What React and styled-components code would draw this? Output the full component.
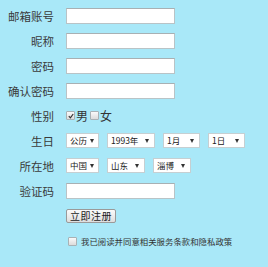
import React from "react";
import styled, { createGlobalStyle } from "styled-components";

const Global = createGlobalStyle`
  html, body { margin: 0; padding: 0; background: #a9e8f8; }
  body { font-family: "Noto Sans CJK SC", "Noto Sans", sans-serif; color: #333; }
`;

const Form = styled.div`
  display: grid;
  grid-template-columns: 54px 1fr;
  grid-template-rows: repeat(9, 25px) 26px;
  column-gap: 12px;
  padding-top: 3px;
  width: 268px;
  height: 267px;
  box-sizing: border-box;
  overflow: hidden;
`;

const Label = styled.div`
  display: flex;
  align-items: center;
  justify-content: flex-end;
  font-size: 11.5px;
  color: #3a3a3a;
  white-space: nowrap;
`;

const Field = styled.div`
  display: flex;
  align-items: center;
  gap: ${(p) => p.$gap || 0}px;
  grid-column: 2;
`;

const Input = styled.div`
  width: 107px;
  height: 14px;
  background: #fff;
  border: 1px solid #b9c3c6;
  border-top-color: #a8b0b3;
`;

const Check = styled.span`
  width: 7px;
  height: 7px;
  border: 1px solid #a9b2b5;
  border-radius: 1px;
  background: linear-gradient(#fafafa, #dcdcdc);
  display: inline-flex;
  align-items: center;
  justify-content: center;
  flex: none;
`;

const CheckText = styled.span`
  font-size: 12px;
  color: #333;
  margin: 0 2px 0 1px;
`;

const Select = styled.div`
  width: ${(p) => p.$w}px;
  flex: none;
  height: 15px;
  box-sizing: border-box;
  background: #fff;
  border: 1px solid #c6cfd2;
  display: flex;
  align-items: center;
  justify-content: space-between;
  padding: 0 5px 0 3px;
  white-space: nowrap;
  overflow: hidden;
`;

const SelectText = styled.span`
  display: inline-block;
  font-size: 10px;
  color: #222;
  transform: scale(0.85);
  transform-origin: left center;
`;

const Arrow = styled.span`
  width: 0;
  height: 0;
  border-left: 2.5px solid transparent;
  border-right: 2.5px solid transparent;
  border-top: 4px solid #333;
  flex: none;
`;

const Button = styled.div`
  width: 50px;
  height: 14px;
  box-sizing: border-box;
  border: 1px solid #9a9a9a;
  border-radius: 2px;
  background: linear-gradient(#fbfbfb, #dedede);
  font-size: 10px;
  color: #222;
  display: flex;
  align-items: center;
  justify-content: center;
  letter-spacing: 0.5px;
  white-space: nowrap;
`;

const Agree = styled.div`
  display: flex;
  align-items: center;
  grid-column: 2;
  padding-left: 2px;
  gap: 4px;
`;

const AgreeText = styled.span`
  display: inline-block;
  font-size: 10px;
  color: #333;
  white-space: nowrap;
  transform: scale(0.84);
  transform-origin: left center;
`;

const Tick = () => (
  <svg width="6" height="6" viewBox="0 0 6 6">
    <path d="M0.8 3.2 L2.4 4.8 L5.2 1" stroke="#333" strokeWidth="1.2" fill="none" />
  </svg>
);

const TextRow = ({ label }) => (
  <>
    <Label>{label}</Label>
    <Field>
      <Input />
    </Field>
  </>
);

const Dropdown = ({ w, children }) => (
  <Select $w={w}>
    <SelectText>{children}</SelectText>
    <Arrow />
  </Select>
);

export default function App() {
  return (
    <>
      <Global />
      <Form>
        <TextRow label="邮箱账号" />
        <TextRow label="昵称" />
        <TextRow label="密码" />
        <TextRow label="确认密码" />
        <Label>性别</Label>
        <Field>
          <Check>
            <Tick />
          </Check>
          <CheckText>男</CheckText>
          <Check />
          <CheckText>女</CheckText>
        </Field>
        <Label>生日</Label>
        <Field $gap={8}>
          <Dropdown w={33}>公历</Dropdown>
          <Dropdown w={48}>1993年</Dropdown>
          <Dropdown w={37}>1月</Dropdown>
          <Dropdown w={37}>1日</Dropdown>
        </Field>
        <Label>所在地</Label>
        <Field $gap={8}>
          <Dropdown w={33}>中国</Dropdown>
          <Dropdown w={38}>山东</Dropdown>
          <Dropdown w={38}>淄博</Dropdown>
        </Field>
        <TextRow label="验证码" />
        <Field>
          <Button>立即注册</Button>
        </Field>
        <Agree>
          <Check />
          <AgreeText>我已阅读并同意相关服务条款和隐私政策</AgreeText>
        </Agree>
      </Form>
    </>
  );
}
